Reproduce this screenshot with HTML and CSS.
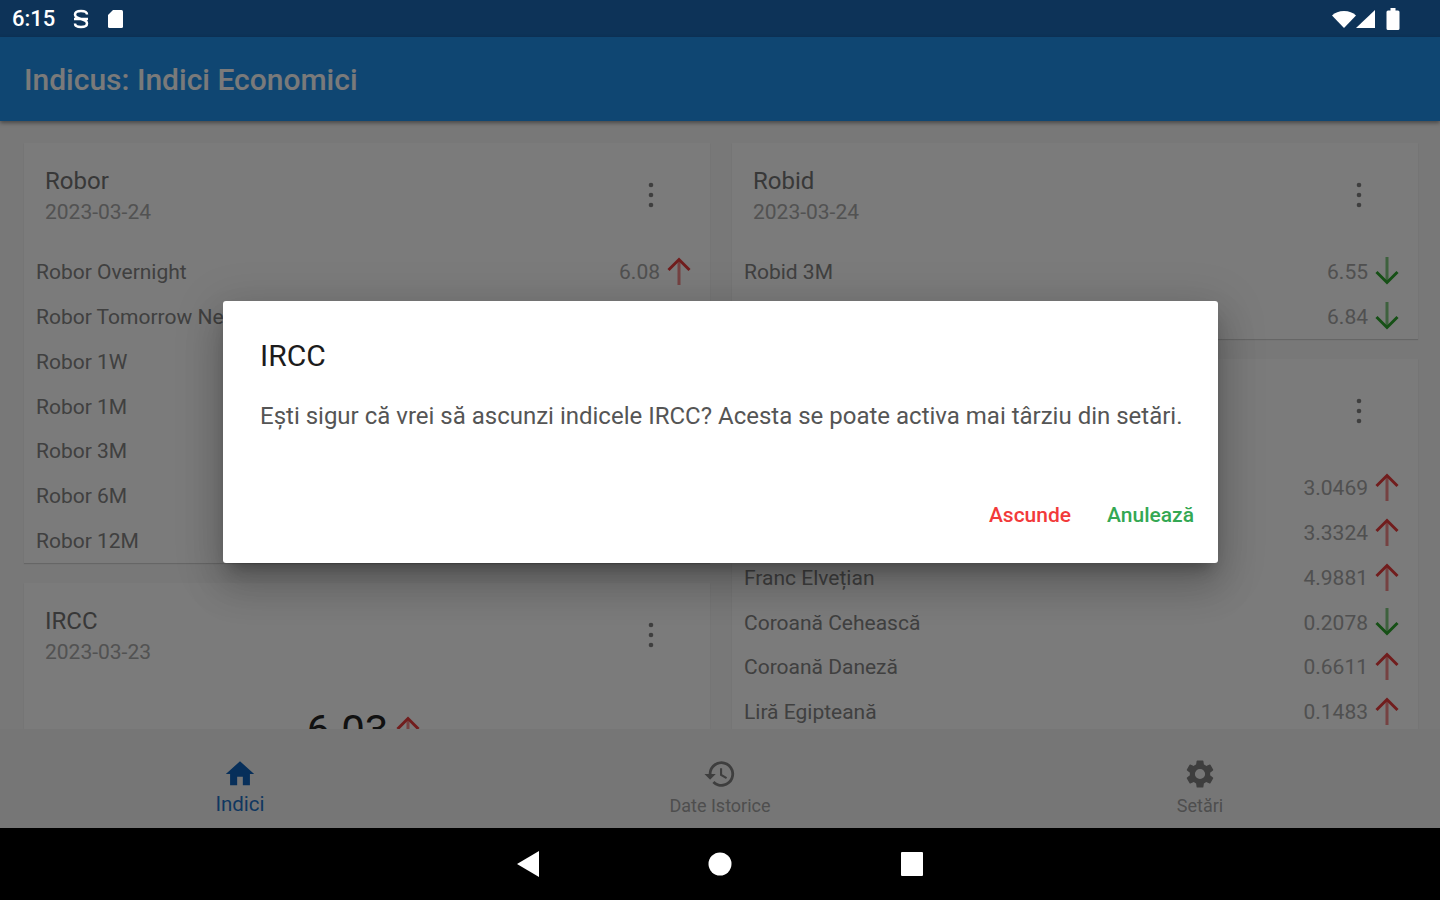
FILE: index.html
```html
<!DOCTYPE html>
<html lang="en">
<head>
    <meta charset="UTF-8">
    <title>Indicus: Indici Economici</title>
    <link rel="stylesheet" href="styles.css">
</head>
<body>
    <svg class="sprites" width="0" height="0">
        <symbol id="up" viewBox="0 0 24 30">
            <path class="stem" d="M12 3v25"/>
            <path d="M1.500 13 12 2.500 22.500 13"/>
        </symbol>
        <symbol id="down" viewBox="0 0 24 30">
            <path class="stem" d="M12 0v25"/>
            <path d="M1.500 15 12 25.500 22.500 15"/>
        </symbol>
        <symbol id="dots" viewBox="0 0 6 26">
            <circle cx="3" cy="3" r="2.300"/>
            <circle cx="3" cy="13" r="2.300"/>
            <circle cx="3" cy="23" r="2.300"/>
        </symbol>
    </svg>

    <div class="status-bar">
        <div class="status-group">
            <span class="clock">6:15</span>
            <svg class="status-s" width="18" height="20" viewBox="0 0 18 20"><path d="M15 5.500C15 3 13 2 9 2S3 3 3 5.500 5 9 9 10s6 2 6 4.500S13 18 9 18s-6-1-6-3.500M2 10h14"/></svg>
            <svg width="18" height="20" viewBox="0 0 18 20"><path d="M7 1h8.500A1.500 1.500 0 0 1 17 2.500v15a1.500 1.500 0 0 1-1.500 1.500h-12A1.500 1.500 0 0 1 2 17.500V6z"/></svg>
        </div>
        <div class="status-group status-right">
            <svg width="24" height="18" viewBox="0 0 24 18"><path d="M0 5.500C3 2.500 7 1 12 1s9 1.500 12 4.500L12 18z"/></svg>
            <svg width="20" height="20" viewBox="0 0 20 20"><path d="M19 1v18H0z"/></svg>
            <svg class="status-battery" width="14" height="22" viewBox="0 0 14 22"><path d="M4.500 0h5v2.500H12A1.500 1.500 0 0 1 13.500 4v16.500A1.500 1.500 0 0 1 12 22H2A1.500 1.500 0 0 1 .5 20.500V4A1.500 1.500 0 0 1 2 2.500h2.500z"/></svg>
        </div>
    </div>

    <main class="app">
        <header class="app-bar">Indicus: Indici Economici</header>

        <div class="content">
            <div class="column">
                <section class="card">
                    <div class="card-head">
                        <div>
                            <h2>Robor</h2>
                            <p class="date">2023-03-24</p>
                        </div>
                        <svg class="menu"><use href="#dots"/></svg>
                    </div>
                    <div class="row"><span>Robor Overnight</span><span class="value">6.08 <svg class="arrow rise"><use href="#up"/></svg></span></div>
                    <div class="row"><span>Robor Tomorrow Next</span></div>
                    <div class="row"><span>Robor 1W</span></div>
                    <div class="row"><span>Robor 1M</span></div>
                    <div class="row"><span>Robor 3M</span></div>
                    <div class="row"><span>Robor 6M</span></div>
                    <div class="row"><span>Robor 12M</span></div>
                </section>
                <section class="card">
                    <div class="card-head">
                        <div>
                            <h2>IRCC</h2>
                            <p class="date">2023-03-23</p>
                        </div>
                        <svg class="menu"><use href="#dots"/></svg>
                    </div>
                    <div class="big-value">6.03 <svg class="arrow rise"><use href="#up"/></svg></div>
                </section>
            </div>

            <div class="column">
                <section class="card">
                    <div class="card-head">
                        <div>
                            <h2>Robid</h2>
                            <p class="date">2023-03-24</p>
                        </div>
                        <svg class="menu"><use href="#dots"/></svg>
                    </div>
                    <div class="row"><span>Robid 3M</span><span class="value">6.55 <svg class="arrow fall"><use href="#down"/></svg></span></div>
                    <div class="row"><span></span><span class="value">6.84 <svg class="arrow fall"><use href="#down"/></svg></span></div>
                </section>
                <section class="card">
                    <div class="card-head">
                        <div></div>
                        <svg class="menu"><use href="#dots"/></svg>
                    </div>
                    <div class="row"><span></span><span class="value">3.0469 <svg class="arrow rise"><use href="#up"/></svg></span></div>
                    <div class="row"><span></span><span class="value">3.3324 <svg class="arrow rise"><use href="#up"/></svg></span></div>
                    <div class="row"><span>Franc Elvețian</span><span class="value">4.9881 <svg class="arrow rise"><use href="#up"/></svg></span></div>
                    <div class="row"><span>Coroană Cehească</span><span class="value">0.2078 <svg class="arrow fall"><use href="#down"/></svg></span></div>
                    <div class="row"><span>Coroană Daneză</span><span class="value">0.6611 <svg class="arrow rise"><use href="#up"/></svg></span></div>
                    <div class="row"><span>Liră Egipteană</span><span class="value">0.1483 <svg class="arrow rise"><use href="#up"/></svg></span></div>
                </section>
            </div>
        </div>

        <nav class="bottom-nav">
            <div class="tab active">
                <svg width="34" height="34" viewBox="0 0 24 24"><path d="M10 20v-6h4v6h5v-8h3L12 3 2 12h3v8z"/></svg>
                <span>Indici</span>
            </div>
            <div class="tab">
                <svg width="34" height="34" viewBox="0 0 24 24"><path d="M13 3a9 9 0 0 0-9 9H1l3.890 3.890.07.140L9 12H6a7 7 0 1 1 2.050 4.950l-1.420 1.420A9 9 0 1 0 13 3zm-1 5v5l4.280 2.540.72-1.210-3.500-2.080V8z"/></svg>
                <span>Date Istorice</span>
            </div>
            <div class="tab">
                <svg width="34" height="34" viewBox="0 0 24 24"><path d="M19.140 12.940c.04-.3.060-.61.060-.94s-.02-.64-.07-.94l2.030-1.580a.49.490 0 0 0 .12-.61l-1.920-3.320a.49.490 0 0 0-.59-.22l-2.390.96a7 7 0 0 0-1.620-.94l-.36-2.540a.48.480 0 0 0-.48-.41h-3.840a.48.480 0 0 0-.47.41l-.36 2.540c-.59.24-1.130.57-1.620.94l-2.390-.96a.48.480 0 0 0-.59.22L2.740 8.870a.48.480 0 0 0 .12.61l2.030 1.580c-.05.3-.09.63-.09.94s.02.64.07.94l-2.030 1.580a.49.490 0 0 0-.12.61l1.920 3.320c.12.22.37.290.59.220l2.390-.96c.5.380 1.030.7 1.620.94l.36 2.540c.05.240.24.410.48.410h3.840c.24 0 .44-.17.47-.41l.36-2.540c.59-.24 1.130-.56 1.620-.94l2.390.96c.22.080.47 0 .59-.22l1.920-3.320a.48.480 0 0 0-.12-.61zM12 15.600a3.600 3.600 0 1 1 0-7.200 3.600 3.600 0 0 1 0 7.200z"/></svg>
                <span>Setări</span>
            </div>
        </nav>

        <div class="scrim">
            <div class="dialog">
                <h3>IRCC</h3>
                <p>Ești sigur că vrei să ascunzi indicele IRCC? Acesta se poate activa mai târziu din setări.</p>
                <div class="dialog-actions">
                    <button class="btn-hide">Ascunde</button>
                    <button class="btn-cancel">Anulează</button>
                </div>
            </div>
        </div>
    </main>

    <div class="nav-bar">
        <svg width="24" height="28" viewBox="0 0 24 28"><path d="M23 1v26L1 14z"/></svg>
        <svg width="24" height="24" viewBox="0 0 24 24"><circle cx="12" cy="12" r="11.500"/></svg>
        <svg width="24" height="24" viewBox="0 0 24 24"><rect x="1" y="0" width="22" height="24" rx="1"/></svg>
    </div>
</body>
</html>
```

FILE: styles.css
```css
* {
    box-sizing: border-box;
    margin: 0;
    padding: 0;
}

body {
    font-family: Roboto, "Liberation Sans", sans-serif;
    width: 1440px;
    height: 900px;
    overflow: hidden;
    display: flex;
    flex-direction: column;
    background: #000;
}

.sprites {
    position: absolute;
}

/* status bar sits above the scrim */
.status-bar {
    height: 37px;
    flex: none;
    display: flex;
    justify-content: space-between;
    align-items: center;
    padding: 0 40px 0 12px;
    background: #0d3358;
}

.status-group {
    display: flex;
    align-items: center;
    gap: 16px;
    fill: #fff;
}

.status-right {
    gap: 0;
}

.status-battery {
    margin-left: 10px;
}

.status-s {
    fill: none;
    stroke: #fff;
    stroke-width: 2.500;
}

.clock {
    color: #fff;
    font-size: 22px;
    font-weight: 500;
    width: 44px;
}

.app {
    position: relative;
    flex: 1;
    display: flex;
    flex-direction: column;
    min-height: 0;
    background: #f0f0f0;
}

.app-bar {
    height: 84px;
    flex: none;
    display: flex;
    align-items: center;
    padding-left: 24px;
    background: #1e8ce4;
    color: #f4f4f4;
    font-size: 30px;
    font-weight: 500;
    box-shadow: 0 2px 4px rgba(0,0,0,0.4);
    position: relative;
}

.content {
    flex: 1;
    min-height: 0;
    overflow: hidden;
    display: grid;
    grid-template-columns: 1fr 1fr;
    gap: 22px;
    padding: 22px 22px 0 24px;
}

.column {
    display: flex;
    flex-direction: column;
    gap: 20px;
    min-width: 0;
}

.card {
    background: #f6f6f6;
    box-shadow: 0 1px 1px rgba(0,0,0,0.15);
    padding-right: 19px;
    flex: none;
}

.card-head {
    height: 106.400px;
    padding: 23px 0 0 21px;
    display: flex;
    justify-content: space-between;
    align-items: flex-start;
}

.card-head h2 {
    font-size: 24px;
    font-weight: 400;
    line-height: 30px;
    color: #707070;
}

.date {
    font-size: 21px;
    line-height: 32px;
    color: #a4a4a4;
}

.menu {
    width: 6px;
    height: 26px;
    margin: 16px 37px 0 0;
    fill: #7e7e7e;
}

.row {
    height: 44.800px;
    padding: 1px 0 0 12px;
    display: flex;
    justify-content: space-between;
    align-items: center;
    font-size: 21px;
    color: #808080;
}

.value {
    display: flex;
    align-items: center;
    gap: 7px;
    font-size: 21px;
    color: #a0a0a0;
}

.arrow {
    width: 24px;
    height: 30px;
    fill: none;
    stroke-width: 3;
}

.rise {
    stroke: #e23b3b;
}

.fall {
    stroke: #2ca02c;
}

.stem {
    opacity: 0.6;
}

.big-value {
    display: flex;
    justify-content: center;
    align-items: center;
    gap: 8px;
    padding: 17px 0 0 12px;
    font-size: 42px;
    color: #222;
}

.bottom-nav {
    height: 99px;
    flex: none;
    display: grid;
    grid-template-columns: repeat(3, 1fr);
    background: #ededed;
}

.tab {
    display: flex;
    flex-direction: column;
    align-items: center;
    padding-top: 28px;
    font-size: 18px;
    color: #9c9c9c;
    fill: #7c7c7c;
}

.tab span {
    line-height: 24px;
    margin-top: 3px;
}

.tab.active {
    color: #1e6fc0;
    fill: #0f5fb4;
    font-size: 20.500px;
}

.tab.active span {
    margin-top: 1px;
}

.scrim {
    position: absolute;
    inset: 0;
    display: flex;
    align-items: center;
    justify-content: center;
    background: rgba(0,0,0,0.5);
}

.dialog {
    width: 995px;
    height: 262px;
    margin: -1px 0 0 1px;
    padding: 37px 24px 0 37px;
    background: #fff;
    border-radius: 3px;
    box-shadow: 0 11px 15px -7px rgba(0,0,0,0.3), 0 24px 38px 3px rgba(0,0,0,0.14), 0 9px 46px 8px rgba(0,0,0,0.12);
}

.dialog h3 {
    font-size: 30px;
    font-weight: 400;
    line-height: 36px;
    color: #1c1c1c;
}

.dialog p {
    margin-top: 27px;
    font-size: 24px;
    line-height: 30px;
    color: #555;
}

.dialog-actions {
    display: flex;
    justify-content: flex-end;
    gap: 36px;
    margin-top: 72px;
}

.dialog-actions button {
    border: none;
    background: none;
    font-family: inherit;
    font-size: 21px;
    font-weight: 500;
}

.btn-hide {
    color: #f23a3a;
}

.btn-cancel {
    color: #34a853;
}

.nav-bar {
    height: 72px;
    flex: none;
    background: #000;
    fill: #fff;
    display: flex;
    align-items: center;
    justify-content: center;
    gap: 168px;
}
```
